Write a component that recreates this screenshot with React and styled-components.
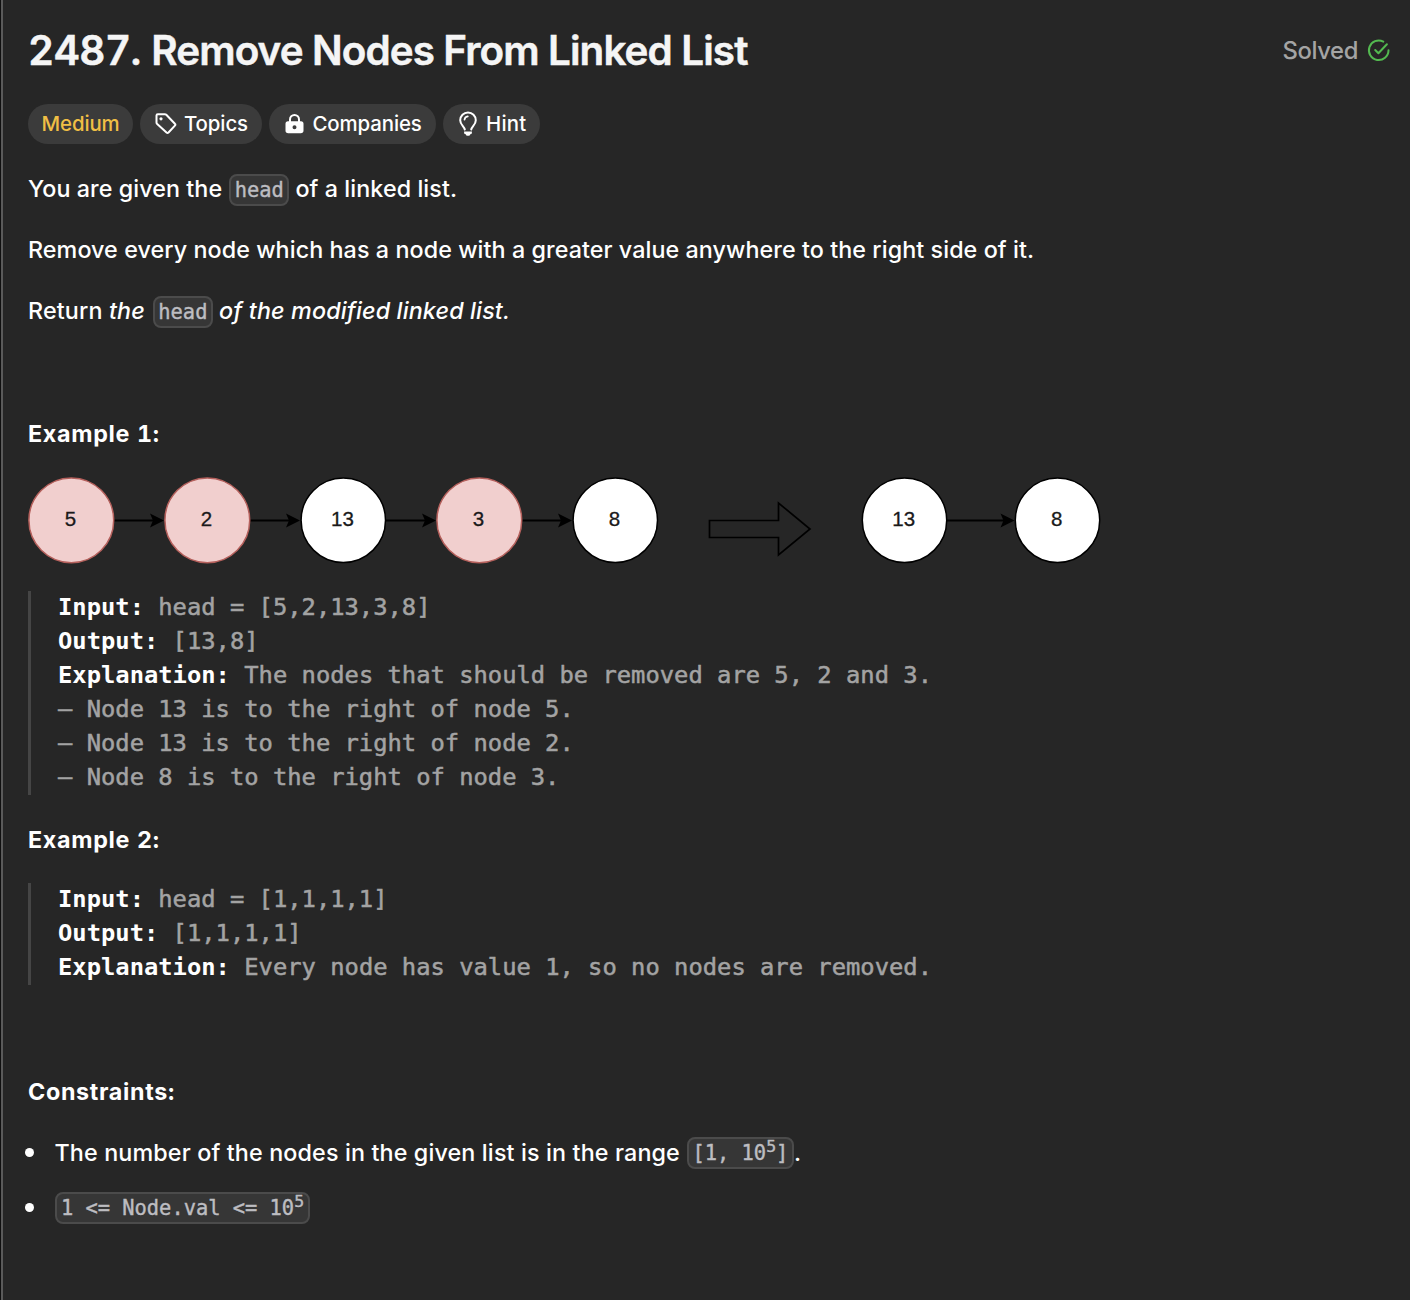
import React from "react";
import styled, { createGlobalStyle } from "styled-components";

const Global = createGlobalStyle`
  * { box-sizing: border-box; }
  body { margin: 0; background: #262626; }
`;

const sans = `Inter, "Liberation Sans", sans-serif`;
const mono = `"DejaVu Sans Mono", "Liberation Mono", monospace`;

const Page = styled.div`
  padding-left: 1px;
  background: #0f0f0f;
`;

const Panel = styled.main`
  min-height: 1300px;
  padding: 20px 20px 0 25px;
  background: #262626;
  border-left: 2px solid #5a5a5a;
  font-family: ${sans};
  color: #fff;
`;

const Header = styled.header`
  display: flex;
  justify-content: space-between;
  align-items: center;
  height: 62px;
`;

const Title = styled.h1`
  margin: 0;
  font-size: 40.4px;
  font-weight: 600;
  line-height: 62px;
  letter-spacing: -0.89px;
  color: #f5f5f5;
  white-space: nowrap;
  -webkit-text-stroke: 0.5px currentColor;
`;

const Number = styled.span`
  letter-spacing: -0.5px;
  font-kerning: none;
  font-variant-numeric: tabular-nums;
`;

const Status = styled.div`
  display: flex;
  align-items: center;
  gap: 8px;
  padding-bottom: 2px;
  font-size: 23.8px;
  font-weight: 450;
  letter-spacing: -0.4px;
  color: #a4a4a4;
`;

const Tags = styled.div`
  display: flex;
  gap: 7px;
  margin-top: 22px;
`;

const Tag = styled.div`
  display: flex;
  align-items: center;
  gap: ${(p) => p.$gap || 7}px;
  width: ${(p) => p.$width}px;
  height: 40px;
  padding: 0 0 1px ${(p) => p.$pad}px;
  border-radius: 20px;
  background: #3b3b3b;
  color: ${(p) => p.$color || "#fff"};
  font-size: 20.4px;
  font-weight: 500;
  letter-spacing: ${(p) => p.$spacing ?? -0.1}px;
  white-space: nowrap;
`;

const Article = styled.article`
  padding-top: 26.5px;
  font-size: 23.3px;
  font-weight: 450;
`;

const Paragraph = styled.p`
  height: 36px;
  margin: 0 0 ${(p) => p.$after ?? 25}px;
  line-height: 36px;
  letter-spacing: ${(p) => p.$spacing ?? 0.075}px;
  white-space: nowrap;
`;

const Heading = styled(Paragraph)`
  font-weight: 700;
  letter-spacing: 0.68px;
  font-variant-numeric: tabular-nums;
`;

const Emphasis = styled.em`
  font-weight: 500;
  letter-spacing: 0.15px;
`;

const Code = styled.code`
  display: inline-block;
  height: 32px;
  margin: 0 0 0 ${(p) => p.$before ?? 1}px;
  padding: 0 ${(p) => p.$pad ?? 3.3}px;
  border: 2px solid #4b4b4b;
  border-radius: 8px;
  background: #363636;
  color: #bdbdc1;
  font-family: ${mono};
  font-size: 20.4px;
  font-style: normal;
  font-weight: 400;
  line-height: 28px;
  letter-spacing: 0;
  white-space: pre;
  -webkit-text-stroke: 0.4px currentColor;
`;

const Power = styled.sup`
  font-size: 16.5px;
  line-height: 0;
  vertical-align: 8.5px;
`;

const Diagram = styled.svg`
  display: block;
  width: 1076px;
  height: 90px;
  margin-bottom: 25.5px;
`;

const Block = styled.pre`
  display: flow-root;
  margin: 0 0 ${(p) => p.$after}px;
  padding: 0 0 1px 27px;
  border-left: 3px solid #454545;
  color: #a3a3a3;
  font-family: ${mono};
  font-size: 23.8px;
  font-weight: 400;
  line-height: 34px;
  -webkit-text-stroke: 0.5px currentColor;
`;

const Line = styled.div`
  height: 34px;

  &:first-child {
    margin-top: -1px;
  }
`;

const Label = styled.strong`
  color: #fff;
  font-weight: 700;
  -webkit-text-stroke: 0;
`;

const List = styled.ul`
  display: flex;
  flex-direction: column;
  gap: 19px;
  margin: 0;
  padding: 0;
  list-style: none;
`;

const Item = styled.li`
  display: flex;
  align-items: center;
  height: 36px;
  line-height: 36px;
  letter-spacing: 0.14px;
  white-space: pre;

  &::before {
    content: "";
    width: 9px;
    height: 9px;
    margin: 0 20.5px 1.5px -3px;
    border-radius: 50%;
    background: #fff;
  }
`;

const NODES = [
  { x: 43.3, value: "5", removed: true },
  { x: 179.3, value: "2", removed: true },
  { x: 315.3, value: "13" },
  { x: 451.3, value: "3", removed: true },
  { x: 587.3, value: "8" },
  { x: 876.5, value: "13" },
  { x: 1029.5, value: "8" },
];
const LINKS = [[86, 136], [222, 272], [358, 408], [494, 544], [919, 986.5]];

function ListDiagram() {
  return (
    <Diagram viewBox="0 0 1076 90">
      {LINKS.map(([from, to]) => (
        <g key={from}>
          <path d={`M${from} 44.5H${to - 9}`} stroke="#000" strokeWidth="2" />
          <path d={`M${to} 44.5l-14 -7 3 7-3 7z`} fill="#000" />
        </g>
      ))}
      {NODES.map((n) => (
        <g key={n.x}>
          <circle cx={n.x} cy="44.3" r={n.removed ? 42.4 : 42.2} fill={n.removed ? "#f1cfce" : "#fff"} stroke={n.removed ? "#b5605c" : "#000"} strokeWidth="1.5" />
          <text x={n.x - 0.8} y="50" textAnchor="middle" fontFamily="Liberation Sans, Arial, sans-serif" fontSize="20.5" fontWeight="400" fill="#1a1a1a" stroke="#1a1a1a" strokeWidth="0.3">{n.value}</text>
        </g>
      ))}
      <path d="M681.5 44.5H750.5V27L782 53 750.5 79V61.5H681.5Z" fill="none" stroke="#000" strokeWidth="1.7" />
    </Diagram>
  );
}

const SolvedIcon = () => (
  <svg width="24" height="24" viewBox="0 0 24 24" fill="none" stroke="#53b950" strokeWidth="2" strokeLinecap="round" strokeLinejoin="round">
    <path d="M17.3 3.6A9.8 9.8 0 1 0 22.5 12.3" />
    <path d="M9.2 12l3.2 3.2L20.9 6.3" />
  </svg>
);

const TagIcon = () => (
  <svg width="22" height="22" viewBox="0 0 22 22" fill="none" stroke="#fff" strokeWidth="2" strokeLinejoin="round">
    <path d="M1.5 2.5Q1.5 1.2 2.8 1.2H9.8Q10.7 1.2 11.3 1.8L19.9 10.8Q20.8 11.7 19.9 12.6L13.5 19.5Q12.5 20.4 11.5 19.5L2.2 10.9Q1.5 10.3 1.5 9.4Z" />
    <circle cx="6" cy="5.8" r="1.6" fill="#fff" stroke="none" />
  </svg>
);

const LockIcon = () => (
  <svg width="19" height="20" viewBox="0 0 19 20" fill="none">
    <path d="M5 8V5.5a4.5 4.5 0 0 1 9 0V8" stroke="#fff" strokeWidth="2" />
    <path fill="#fff" fillRule="evenodd" d="M3 7.3H16Q18.5 7.3 18.5 9.8V16.5Q18.5 19.2 15.8 19.2H3.2Q.5 19.2 .5 16.5V9.8Q.5 7.3 3 7.3ZM9.5 11.2a2 2 0 1 0 0 4 2 2 0 0 0 0-4Z" />
  </svg>
);

const HintIcon = () => (
  <svg width="18" height="26" viewBox="0 0 18 26" fill="none" stroke="#fff" strokeWidth="2" strokeLinecap="round" strokeLinejoin="round">
    <path d="M5.8 18.5C5.3 15.5 1.2 13.8 1.2 9.2a7.8 7.8 0 0 1 15.6 0C16.8 13.8 12.7 15.5 12.2 18.5" />
    <path d="M5.5 8.7A3.8 3.8 0 0 1 8.8 5.3" strokeWidth="1.7" />
    <path d="M5.1 20.5H12.9V22Q12.7 23.2 11.3 23.2Q11 24.8 9.5 24.8H8.5Q7 24.8 6.7 23.2Q5.3 23.2 5.1 22Z" fill="#fff" stroke="none" />
  </svg>
);

export default function App() {
  return (
    <Page>
      <Global />
      <Panel>
        <Header>
          <Title><Number>2487. </Number>Remove Nodes From Linked List</Title>
          <Status>Solved <SolvedIcon /></Status>
        </Header>
        <Tags>
          <Tag $width={105} $pad={13.5} $color="#f0bf45">Medium</Tag>
          <Tag $width={122} $pad={15} $gap={7}><TagIcon />Topics</Tag>
          <Tag $width={166.5} $pad={16} $gap={8.5}><LockIcon />Companies</Tag>
          <Tag $width={97.5} $pad={16} $gap={9.5} $spacing={0.2}><HintIcon />Hint</Tag>
        </Tags>
        <Article>
          <Paragraph $spacing={0.07}>You are given the <Code>head</Code> of a linked list.</Paragraph>
          <Paragraph>Remove every node which has a node with a greater value anywhere to the right side of it.</Paragraph>
          <Paragraph $spacing={0.15}>Return <Emphasis>the <Code $before={1.7}>head</Code> of the modified linked list.</Emphasis></Paragraph>
          <Paragraph $after={26}>&nbsp;</Paragraph>
          <Heading $after={24}>Example 1:</Heading>
          <ListDiagram />
          <Block $after={26.5}>
            <Line><Label>Input:</Label> head = [5,2,13,3,8]</Line>
            <Line><Label>Output:</Label> [13,8]</Line>
            <Line><Label>Explanation:</Label> The nodes that should be removed are 5, 2 and 3.</Line>
            <Line>– Node 13 is to the right of node 5.</Line>
            <Line>– Node 13 is to the right of node 2.</Line>
            <Line>– Node 8 is to the right of node 3.</Line>
          </Block>
          <Heading>Example 2:</Heading>
          <Block $after={27.5}>
            <Line><Label>Input:</Label> head = [1,1,1,1]</Line>
            <Line><Label>Output:</Label> [1,1,1,1]</Line>
            <Line><Label>Explanation:</Label> Every node has value 1, so no nodes are removed.</Line>
          </Block>
          <Paragraph $after={26}>&nbsp;</Paragraph>
          <Heading>Constraints:</Heading>
          <List>
            <Item>The number of the nodes in the given list is in the range <Code $before={0.5} $pad={3.7}>[1, 10<Power>5</Power>]</Code>.</Item>
            <Item><Code $before={0.5} $pad={3.9}>1 &lt;= Node.val &lt;= 10<Power>5</Power></Code></Item>
          </List>
        </Article>
      </Panel>
    </Page>
  );
}
